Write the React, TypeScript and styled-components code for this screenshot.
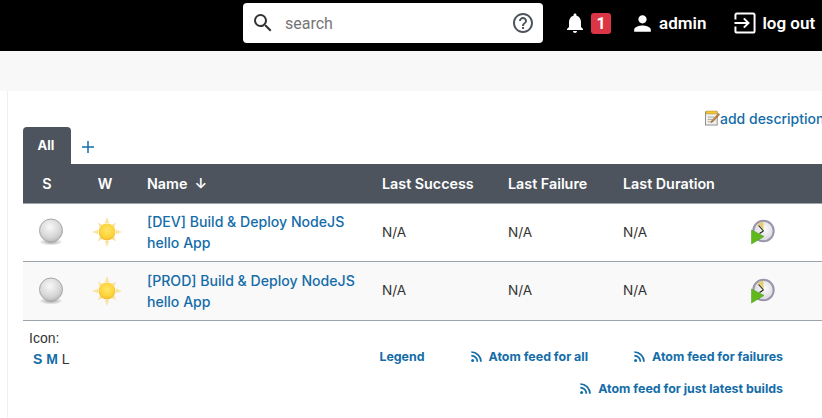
import React from "react";
import styled, { createGlobalStyle } from "styled-components";

const LINK = "#146da8";

const GlobalStyle = createGlobalStyle`
  html, body {
    margin: 0;
    padding: 0;
    background: #fff;
    overflow: hidden;
  }
  body {
    font-family: Inter, "Liberation Sans", sans-serif;
    color: #333;
  }
`;

const Page = styled.div`
  width: 822px;
  height: 418px;
  overflow: hidden;
`;

const Header = styled.header`
  height: 51px;
  background: #000;
  display: flex;
  align-items: flex-start;
  padding: 3px 0 0 243px;
  box-sizing: border-box;
  font-family: Roboto, sans-serif;
`;

const SearchBox = styled.div`
  width: 300px;
  height: 40px;
  background: #fff;
  border-radius: 4px;
  display: flex;
  align-items: center;
  padding: 0 8px;
  box-sizing: border-box;
  flex-shrink: 0;
`;

const SearchText = styled.span`
  flex: 1;
  margin-left: 10px;
  font-size: 16px;
  color: #757575;
`;

const NavItem = styled.div<{ $left: number }>`
  display: flex;
  align-items: center;
  height: 40px;
  margin-left: ${(p) => p.$left}px;
  color: #fff;
  font-size: 17px;
  font-weight: 600;
  white-space: nowrap;
`;

const NavLabel = styled.span<{ $left: number }>`
  margin-left: ${(p) => p.$left}px;
`;

const Badge = styled.span`
  width: 20px;
  height: 21px;
  margin-left: 4px;
  border-radius: 3px;
  background: #dc3545;
  color: #fff;
  font-size: 16px;
  font-weight: 700;
  display: flex;
  align-items: center;
  justify-content: center;
`;

const Breadcrumbs = styled.div`
  height: 40px;
  background: #f8f8f8;
`;

const Main = styled.main`
  width: 835px;
  padding-left: 7px;
  box-sizing: border-box;
`;

const Content = styled.div`
  border-left: 1px solid #f0f0f0;
  padding: 18px 0 0 15px;
  height: 327px;
  box-sizing: border-box;
`;

const DescriptionRow = styled.div`
  display: flex;
  justify-content: flex-end;
  align-items: center;
  height: 18px;
  color: ${LINK};
  font-size: 14px;
  font-weight: 550;
  white-space: nowrap;
  & > span {
    width: 115px;
  }
`;

const Tabs = styled.div`
  display: flex;
  align-items: center;
  height: 37px;
`;

const ActiveTab = styled.div`
  width: 48px;
  height: 37px;
  background: #4d545d;
  border-radius: 4px 4px 0 0;
  color: #fff;
  font-size: 13px;
  font-weight: 700;
  display: flex;
  align-items: center;
  justify-content: center;
  padding: 0 2px 2px 0;
  box-sizing: border-box;
`;

const AddTab = styled.div`
  margin-left: 10px;
  padding-top: 3px;
  display: flex;
`;

const JobTable = styled.table`
  width: 812px;
  border-collapse: collapse;
  table-layout: fixed;
  font-size: 14px;
`;

const HeaderCell = styled.th<{ $center?: boolean; $w: number; $inset?: number }>`
  width: ${(p) => p.$w}px;
  height: 39px;
  box-sizing: border-box;
  padding: 0 ${(p) => p.$inset ?? (p.$center ? 0 : 4)}px 0 ${(p) => (p.$center ? 0 : 4)}px;
  background: #4d545d;
  border-bottom: 1px solid #9aa5ae;
  color: #fff;
  font-size: 14.3px;
  font-weight: 600;
  text-align: ${(p) => (p.$center ? "center" : "left")};
  white-space: nowrap;
`;

const JobRow = styled.tr<{ $alt?: boolean }>`
  height: ${(p) => (p.$alt ? 59 : 58)}px;
  background: ${(p) => (p.$alt ? "#f9f9f9" : "#fff")};
  border-bottom: 1px solid #9aa5ae;
`;

const Cell = styled.td`
  padding: 0 4px;
  text-align: left;
  vertical-align: middle;
  line-height: 21px;
  font-size: 13.6px;
`;

const IconCell = styled.td<{ $left: number }>`
  padding: 0 0 0 ${(p) => p.$left}px;
  vertical-align: middle;
  & > svg {
    display: block;
  }
`;

const JobLink = styled.span`
  display: block;
  max-width: 222px;
  color: ${LINK};
  font-size: 14.1px;
  font-weight: 550;
`;

const Footer = styled.div`
  display: flex;
  width: 760px;
  padding-top: 7px;
`;

const IconSizes = styled.div`
  width: 340px;
  padding-left: 6px;
  font-family: "Liberation Sans", Arial, sans-serif;
  font-size: 14px;
  line-height: 21px;
  color: #333;
`;

const SizeRow = styled.div`
  padding-left: 4px;
`;

const SizeLink = styled.span`
  color: ${LINK};
  font-weight: 700;
`;

const Feeds = styled.div`
  flex: 1;
  display: flex;
  flex-direction: column;
  align-items: flex-end;
  gap: 17px;
  padding-top: 21px;
`;

const FeedRow = styled.div`
  display: flex;
  gap: 46px;
`;

const FeedLink = styled.span`
  display: flex;
  align-items: center;
  gap: 7px;
  color: ${LINK};
  font-size: 12.4px;
  font-weight: 650;
  line-height: 15px;
  white-space: nowrap;
`;

const MaterialIcon = ({
  d,
  size,
  color,
}: {
  d: string;
  size: number;
  color: string;
}) => (
  <svg width={size} height={size} viewBox="0 0 24 24" fill={color}>
    <path d={d} />
  </svg>
);

const SEARCH =
  "M15.5 14h-.79l-.28-.27A6.471 6.471 0 0 0 16 9.5 6.5 6.5 0 1 0 9.5 16c1.61 0 3.09-.59 4.23-1.57l.27.28v.79l5 4.99L20.49 19l-4.99-5zm-6 0C7.01 14 5 11.99 5 9.5S7.01 5 9.5 5 14 7.01 14 9.5 11.99 14 9.5 14z";
const HELP =
  "M11 18h2v-2h-2v2zm1-16C6.48 2 2 6.48 2 12s4.48 10 10 10 10-4.48 10-10S17.52 2 12 2zm0 18c-4.41 0-8-3.59-8-8s3.59-8 8-8 8 3.59 8 8-3.59 8-8 8zm0-14c-2.21 0-4 1.79-4 4h2c0-1.1.9-2 2-2s2 .9 2 2c0 2-3 1.75-3 5h2c0-2.25 3-2.5 3-5 0-2.21-1.79-4-4-4z";
const BELL =
  "M12 22c1.1 0 2-.9 2-2h-4c0 1.1.89 2 2 2zm6-6v-5c0-3.07-1.64-5.64-4.5-6.32V4c0-.83-.67-1.5-1.5-1.5s-1.5.67-1.5 1.5v.68C7.63 5.36 6 7.92 6 11v5l-2 2v1h16v-1l-2-2z";
const PERSON =
  "M12 12c2.21 0 4-1.79 4-4s-1.79-4-4-4-4 1.79-4 4 1.79 4 4 4zm0 2c-2.67 0-8 1.34-8 4v2h16v-2c0-2.66-5.33-4-8-4z";

const ExitIcon = () => (
  <svg width="28" height="28" viewBox="0 0 24 24" fill="none" stroke="#fff" strokeWidth="1.7">
    <path d="M3.8 9V5.2c0-.8.6-1.4 1.4-1.4h13.6c.8 0 1.4.6 1.4 1.4v13.6c0 .8-.6 1.4-1.4 1.4H5.2c-.8 0-1.4-.6-1.4-1.4V15" />
    <path d="M3 12h11.5M11 8l4 4-4 4" />
  </svg>
);

const RssIcon = () => (
  <svg width="11" height="11" viewBox="0 0 11 11" fill="none" stroke={LINK}>
    <circle cx="1.6" cy="9.4" r="1.5" fill={LINK} stroke="none" />
    <path d="M0.3 4.6a6.1 6.1 0 0 1 6.1 6.1" strokeWidth="1.7" />
    <path d="M0.3 1a9.7 9.7 0 0 1 9.7 9.7" strokeWidth="1.7" />
  </svg>
);

const NotepadIcon = () => (
  <svg width="15" height="16" viewBox="0 0 16 16">
    <rect x="0.5" y="1.5" width="12.5" height="14" fill="#f0f0ee" stroke="#8b8b86" />
    <rect x="1" y="0.6" width="12" height="3" rx="1" fill="#eec73f" stroke="#b8932b" strokeWidth="0.6" />
    <path d="M3 7h7M3 9.5h5M3 12h3.5" stroke="#a5a5a0" strokeWidth="1" />
    <path d="M14.6 3.2l1 1-7 7.6-2.2 1 1-2.2z" fill="#d88a2a" stroke="#6e4a1c" strokeWidth="0.6" />
  </svg>
);

const BallIcon = () => (
  <svg width="26" height="28" viewBox="0 0 26 28">
    <defs>
      <radialGradient id="ballFill" cx="45%" cy="35%" r="70%">
        <stop offset="0%" stopColor="#f8f8f8" />
        <stop offset="65%" stopColor="#d6d6d6" />
        <stop offset="100%" stopColor="#b4b4b4" />
      </radialGradient>
      <radialGradient id="ballShade">
        <stop offset="0%" stopColor="#888" stopOpacity="0.8" />
        <stop offset="100%" stopColor="#888" stopOpacity="0" />
      </radialGradient>
    </defs>
    <ellipse cx="13" cy="24" rx="12" ry="3.5" fill="url(#ballShade)" />
    <circle cx="13" cy="12.5" r="11.5" fill="url(#ballFill)" stroke="#a9a9a9" strokeWidth="1" />
  </svg>
);

const SUN_RAYS = [0, 45, 90, 135, 180, 225, 270, 315];

const SunIcon = () => (
  <svg width="30" height="30" viewBox="0 0 30 30">
    <defs>
      <radialGradient id="sunFill" cx="50%" cy="40%" r="60%">
        <stop offset="0%" stopColor="#ffe566" />
        <stop offset="70%" stopColor="#fdd33a" />
        <stop offset="100%" stopColor="#f2b72a" />
      </radialGradient>
    </defs>
    {SUN_RAYS.map((angle) => (
      <polygon
        key={angle}
        points={angle % 90 === 0 ? "12.8,6 17.2,6 15,0" : "13,7 17,7 15,2"}
        fill="#fbe3a4"
        transform={`rotate(${angle} 15 15)`}
      />
    ))}
    <circle cx="15" cy="15" r="8.4" fill="url(#sunFill)" />
  </svg>
);

const BuildIcon = () => (
  <svg width="24" height="26" viewBox="0 0 24 26">
    <defs>
      <radialGradient id="clockFace" cx="55%" cy="40%" r="65%">
        <stop offset="0%" stopColor="#fbfbfb" />
        <stop offset="100%" stopColor="#d4d4da" />
      </radialGradient>
    </defs>
    <circle cx="12.5" cy="12" r="10.2" fill="url(#clockFace)" stroke="#9a95aa" strokeWidth="2" />
    <path d="M12.5 12L6.5 5.2a9 9 0 0 1 6-2.4z" fill="#e4cf78" />
    <path d="M12.5 12L7.5 6.5M12.5 12L8.5 14.5" stroke="#222" strokeWidth="1.1" />
    <polygon points="0.5,11 13,17.5 0.5,25" fill="#5fb81c" stroke="#4a9a14" strokeWidth="0.5" />
  </svg>
);

const jobs = [
  { name: "[DEV] Build & Deploy NodeJS hello App", alt: false },
  { name: "[PROD] Build & Deploy NodeJS hello App", alt: true },
];

const App = (): JSX.Element => {
  return (
    <Page>
      <GlobalStyle />
      <Header>
        <SearchBox>
          <MaterialIcon d={SEARCH} size={24} color="#333" />
          <SearchText>search</SearchText>
          <MaterialIcon d={HELP} size={24} color="#4d545d" />
        </SearchBox>
        <NavItem $left={20}>
          <MaterialIcon d={BELL} size={24} color="#fff" />
          <Badge>1</Badge>
        </NavItem>
        <NavItem $left={19}>
          <MaterialIcon d={PERSON} size={25} color="#fff" />
          <NavLabel $left={4}>admin</NavLabel>
        </NavItem>
        <NavItem $left={25}>
          <ExitIcon />
          <NavLabel $left={3}>log out</NavLabel>
        </NavItem>
      </Header>
      <Breadcrumbs />
      <Main>
        <Content>
          <DescriptionRow>
            <NotepadIcon />
            <span>add description</span>
          </DescriptionRow>
          <Tabs>
            <ActiveTab>All</ActiveTab>
            <AddTab>
              <svg width="14" height="14" viewBox="0 0 14 14" stroke={LINK} strokeWidth="1.5">
                <path d="M7 1v12M1 7h12" />
              </svg>
            </AddTab>
          </Tabs>
          <JobTable>
            <thead>
              <tr>
                <HeaderCell $center $w={48}>S</HeaderCell>
                <HeaderCell $center $w={72} $inset={4}>W</HeaderCell>
                <HeaderCell $w={235}>Name&nbsp; ↓</HeaderCell>
                <HeaderCell $w={126}>Last Success</HeaderCell>
                <HeaderCell $w={115}>Last Failure</HeaderCell>
                <HeaderCell $w={116}>Last Duration</HeaderCell>
                <HeaderCell $w={100} />
              </tr>
            </thead>
            <tbody>
              {jobs.map((job) => (
                <JobRow key={job.name} $alt={job.alt}>
                  <IconCell $left={15}><BallIcon /></IconCell>
                  <IconCell $left={21}><SunIcon /></IconCell>
                  <Cell><JobLink>{job.name}</JobLink></Cell>
                  <Cell>N/A</Cell>
                  <Cell>N/A</Cell>
                  <Cell>N/A</Cell>
                  <IconCell $left={16}><BuildIcon /></IconCell>
                </JobRow>
              ))}
            </tbody>
          </JobTable>
          <Footer>
            <IconSizes>
              Icon:
              <SizeRow>
                <SizeLink>S</SizeLink> <SizeLink>M</SizeLink> L
              </SizeRow>
            </IconSizes>
            <Feeds>
              <FeedRow>
                <FeedLink>Legend</FeedLink>
                <FeedLink><RssIcon />Atom feed for all</FeedLink>
                <FeedLink><RssIcon />Atom feed for failures</FeedLink>
              </FeedRow>
              <FeedLink><RssIcon />Atom feed for just latest builds</FeedLink>
            </Feeds>
          </Footer>
        </Content>
      </Main>
    </Page>
  );
};

export default App;
